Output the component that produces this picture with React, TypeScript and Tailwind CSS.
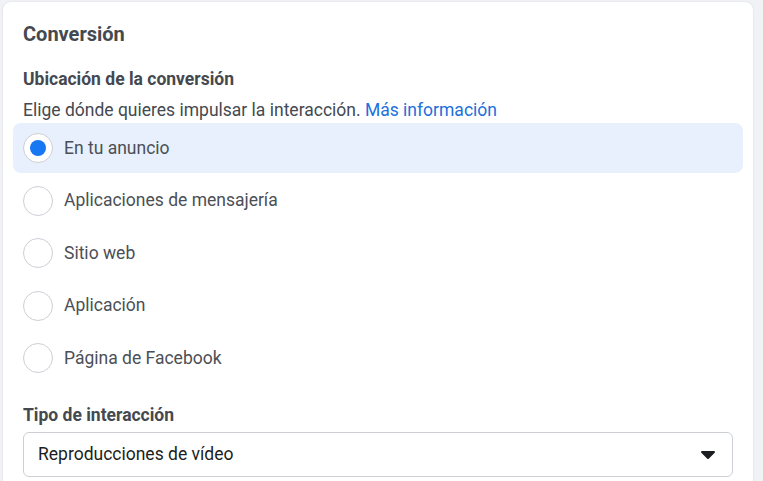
import React from "react";

const options = [
  "En tu anuncio",
  "Aplicaciones de mensajería",
  "Sitio web",
  "Aplicación",
  "Página de Facebook",
];

function Radio({ checked }: { checked: boolean }) {
  return (
    <span className="grid h-[30px] w-[30px] shrink-0 place-items-center rounded-full border border-[#ccd0d5] bg-white">
      {checked && <span className="h-[16px] w-[16px] rounded-full bg-[#1877f2]" />}
    </span>
  );
}

export default function App() {
  return (
    <div className="h-[481px] w-[763px] overflow-hidden bg-[#f0f2f5] pl-[3px] pt-[2px] font-['Roboto',sans-serif]">
      <div className="h-[520px] w-[750px] rounded-lg bg-white px-5 pt-[20px] shadow-[0_0_2px_rgba(0,0,0,0.12)]">
        <h2 className="text-[20px] font-bold leading-6 text-[#444950]">Conversión</h2>

        <h3 className="mt-[23px] text-[17.5px] font-bold leading-5 text-[#444950]">
          Ubicación de la conversión
        </h3>
        <p className="mt-[11px] text-[17.5px] leading-5 text-[#444950]">
          Elige dónde quieres impulsar la interacción.{" "}
          <a className="text-[#216fdb]">Más información</a>
        </p>

        <div className="-mx-[10px] mt-[3px] flex flex-col gap-[2.5px]">
          {options.map((label, i) => (
            <label
              key={label}
              className={`flex h-[50px] items-center gap-[11px] rounded-lg px-[10px] ${
                i === 0 ? "bg-[#e7f0fc]" : ""
              }`}
            >
              <Radio checked={i === 0} />
              <span className="text-[17.5px] text-[#4b4f56]">{label}</span>
            </label>
          ))}
        </div>

        <h3 className="mt-[22px] text-[17.5px] font-bold leading-5 text-[#444950]">
          Tipo de interacción
        </h3>
        <div className="mt-[7px] flex h-[45px] items-center justify-between rounded-md border border-[#ccd0d5] pl-[14px] pr-[17px]">
          <span className="text-[17.5px] text-[#1c1e21]">Reproducciones de vídeo</span>
          <svg width="14" height="8" viewBox="0 0 14 8">
            <path d="M1 0h12a1 1 0 0 1 .7 1.7l-6 6a1 1 0 0 1-1.4 0l-6-6A1 1 0 0 1 1 0z" fill="#1c1e21" />
          </svg>
        </div>
      </div>
    </div>
  );
}
